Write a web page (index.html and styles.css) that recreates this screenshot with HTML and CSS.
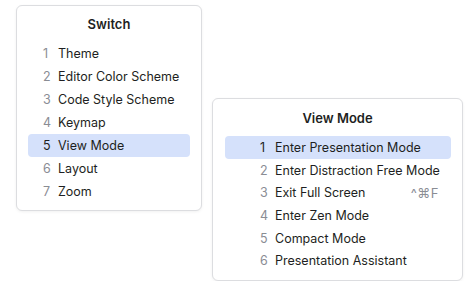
FILE: index.html
```html
<!DOCTYPE html>
<html>
<head>
    <meta charset="utf-8">
    <title>Switch popups</title>
    <link rel="stylesheet" href="styles.css">
</head>
<body>
    <div class="canvas">
        <div class="popup switch">
            <div class="title">Switch</div>
            <div class="row"><span class="num">1</span><span class="label">Theme</span></div>
            <div class="row"><span class="num">2</span><span class="label">Editor Color Scheme</span></div>
            <div class="row"><span class="num">3</span><span class="label">Code Style Scheme</span></div>
            <div class="row"><span class="num">4</span><span class="label">Keymap</span></div>
            <div class="row selected"><span class="num">5</span><span class="label">View Mode</span></div>
            <div class="row"><span class="num">6</span><span class="label">Layout</span></div>
            <div class="row"><span class="num">7</span><span class="label">Zoom</span></div>
        </div>

        <div class="popup viewmode">
            <div class="title">View Mode</div>
            <div class="row selected"><span class="num">1</span><span class="label">Enter Presentation Mode</span></div>
            <div class="row"><span class="num">2</span><span class="label">Enter Distraction Free Mode</span></div>
            <div class="row"><span class="num">3</span><span class="label">Exit Full Screen</span><span class="keys">^⌘F</span></div>
            <div class="row"><span class="num">4</span><span class="label">Enter Zen Mode</span></div>
            <div class="row"><span class="num">5</span><span class="label">Compact Mode</span></div>
            <div class="row"><span class="num">6</span><span class="label">Presentation Assistant</span></div>
        </div>
    </div>
</body>
</html>
```

FILE: styles.css
```css
/*page*/
body {
    margin: 0;
    background: #ffffff;
    font-family: Inter, "Noto Sans", sans-serif;
    font-size: 12.5px;
    color: #1e1f22;
}

.canvas {
    display: flex;
    align-items: flex-start;
    padding: 5px 0 0 16px;
}

/*popups*/
.popup {
    background: #ffffff;
    border: 1px solid #dcdde0;
    border-radius: 6px;
    box-shadow: 0 1px 3px rgba(0, 0, 0, 0.06);
}

.switch {
    width: 184px;
    padding: 9px 0 7px 0;
}

.viewmode {
    width: 249px;
    margin-left: 10px;
    margin-top: 93px;
    padding: 10px 0 8px 0;
}

.title {
    text-align: center;
    font-weight: 600;
    font-size: 13px;
    line-height: 18px;
    margin-bottom: 9px;
}

/*rows*/
.row {
    display: flex;
    align-items: center;
    height: 23px;
    margin: 0 11px 0 11px;
    padding-left: 15px;
    border-radius: 4px;
    white-space: nowrap;
}

.viewmode .row {
    height: 22.7px;
    margin: 0 11px 0 12px;
    padding-left: 35px;
    padding-right: 8px;
}

.row.selected {
    background: #d5e1fb;
}

.num {
    flex-shrink: 0;
    width: 9px;
    color: #8a8d94;
    margin-right: 6px;
}

.selected .num {
    color: #1e1f22;
}

.label {
    flex: 1;
}

.keys {
    color: #8a8d94;
    font-size: 13px;
    letter-spacing: 0.5px;
    margin-right: 4px;
}
```
